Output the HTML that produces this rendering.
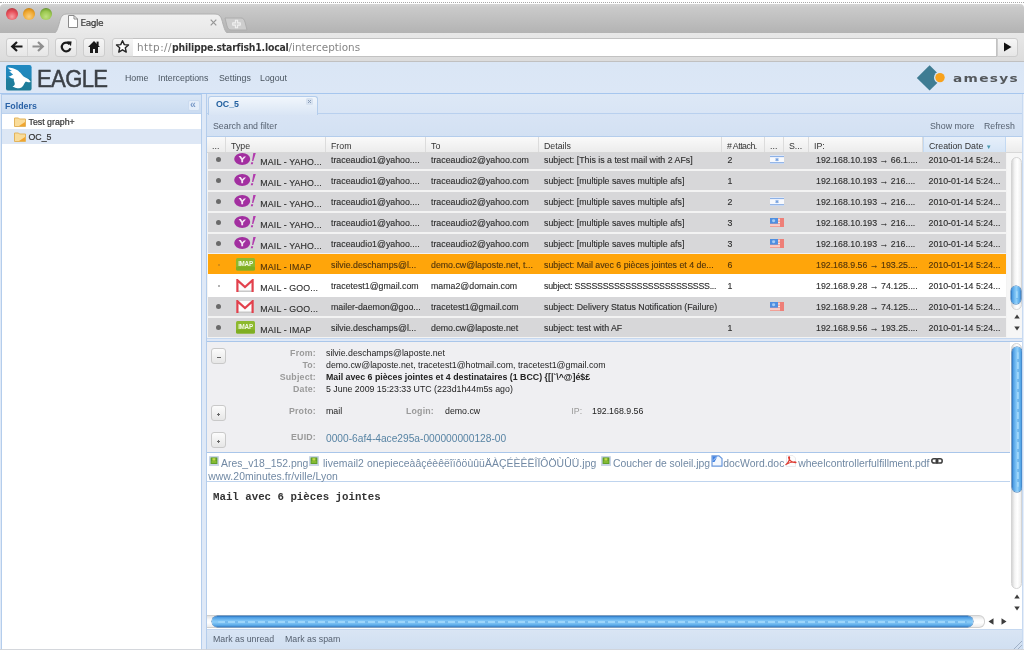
<!DOCTYPE html>
<html>
<head>
<meta charset="utf-8">
<title>Eagle</title>
<style>
*{box-sizing:border-box;margin:0;padding:0}
html,body{width:1024px;height:650px;overflow:hidden;background:#fff}
body{font-family:"Liberation Sans",sans-serif;font-size:11px;color:#222;position:relative;filter:blur(0.42px)}
.abs{position:absolute}
.t{position:absolute;white-space:nowrap;line-height:14px;height:14px}
/* browser chrome */
#titlebar{left:0;top:3.5px;width:1024px;height:29.5px;background:linear-gradient(#d6d6d6,#cacaca 12%,#c0c0c0 50%,#b3b3b3);border-radius:4px 4px 0 0}
#topline{left:0;top:2px;width:1024px;height:1px;border-top:1px dotted #a8a8a8}
#toolbar{left:0;top:33px;width:1024px;height:28.6px;background:linear-gradient(#e8e8e8,#dcdcdc);border-bottom:1px solid #c0c0c0}
.light{width:11.5px;height:11.5px;border-radius:6px;top:8px}
#btab{left:51px;top:13px;width:180px;height:21px}
.nbtn{top:37.5px;height:19px;border:1px solid #cdcdcd;border-radius:3px;background:linear-gradient(#f6f6f6,#e6e6e6)}
#url{left:133px;top:37.5px;width:864px;height:19px;background:#fff;border:1px solid #c2c2c2;border-left:none}
/* app */
#apphead{left:0;top:61.6px;width:1024px;height:32.4px;background:linear-gradient(#dae6f5,#dce7f6);border-bottom:1px solid #a6c6ee}
#appbg{left:0;top:94px;width:1024px;height:556px;background:#dfe9f7}
.nav{top:70.8px;color:#4a5560;font-size:8.8px}
/* west panel */
#west{left:1px;top:94px;width:201px;height:556px;border:1px solid #b4cdec;border-bottom:none;background:#fff}
#westhd{left:0;top:0;width:199px;height:19px;background:linear-gradient(#d9e6f6,#cbdcf1);border-bottom:1px solid #bdd3ef}
/* main */
#main{left:206px;top:94px;width:818px;height:556px;border-left:1px solid #b4cdec;background:#dfe8f6}
.row{position:absolute;left:1px;width:798px;height:19px;background:#d4d4d4}
.row.sel .t{color:#5c3600}
.tb{color:#566170;font-size:8.8px;letter-spacing:0}
.row .t{top:3px;color:#2c2c2c;font-size:8.8px;-webkit-text-stroke:0.12px #2c2c2c}
.hd{position:absolute;top:0;height:15px;line-height:18.6px;color:#333;border-right:1px solid #dcdcdc;padding-left:5px;white-space:nowrap;font-size:8.8px;overflow:hidden}

.vthumb{width:10px;border-radius:5px;background:linear-gradient(90deg,#2c72bc,#4f9fe4 14%,#7ec4f6 42%,#8ccdf8 55%,#5aabea 84%,#3a7cc0);box-shadow:0 0 0 0.5px #2f6fb0}
.hthumb{height:11px;border-radius:6px;background:linear-gradient(#2c72bc,#4f9fe4 14%,#7ec4f6 42%,#8ccdf8 55%,#5aabea 84%,#3a7cc0);box-shadow:0 0 0 0.5px #2f6fb0}
.pm{width:15px;height:16px;border:1px solid #c9c9c9;border-radius:3px;background:linear-gradient(#fcfcfc,#e6e6e6)}
.pm i{position:absolute;background:#666;display:block}
.lb{left:216px;width:100px;text-align:right;color:#9a9a9a;font-weight:bold;font-size:8.8px;letter-spacing:0.2px}
.vl{left:326px;color:#222;font-size:8.8px}
.at{font-size:10.4px;line-height:14px;color:#7189a4;top:456.5px}
.att s{display:inline-block;text-decoration:none;width:9px;height:8px;vertical-align:4px;margin-right:1px}
.att s.im{background:linear-gradient(#9fbf4a,#6f9a2a);border:1px solid #8aa8c0}
.att s.dc{background:#e8f0fb;border:1px solid #3d78c8;height:10px;vertical-align:1px}
.att s.pd{background:transparent;border-top:2px solid #d83a2a;height:6px}
.att s.lk{background:#555;height:3px;border-radius:2px;vertical-align:6px;width:10px}

.hthumb::after{content:"";position:absolute;left:6px;right:6px;top:4.5px;height:2px;background:repeating-linear-gradient(90deg,rgba(190,232,255,.4) 0 7px,rgba(60,140,215,.25) 7px 10px);border-radius:1px}
.vthumb::after{content:"";position:absolute;top:5px;bottom:5px;left:4.5px;width:2px;background:repeating-linear-gradient(rgba(190,232,255,.4) 0 7px,rgba(60,140,215,.25) 7px 10px);border-radius:1px}
</style>
</head>
<body>
<!-- ===== Browser chrome ===== -->
<div class="abs" id="topline"></div>
<div class="abs" id="titlebar"></div>
<div class="abs light" style="left:6px;background:radial-gradient(circle at 50% 72%,#f6a0a4,#e8505a 50%,#c8404a 72%,#7a3020 100%)"></div>
<div class="abs light" style="left:23px;background:radial-gradient(circle at 50% 72%,#f8cf80,#f0a830 50%,#d8901c 72%,#80500c 100%)"></div>
<div class="abs light" style="left:40px;background:radial-gradient(circle at 50% 72%,#bfe080,#9cc850 50%,#78a838 72%,#344c20 100%)"></div>
<svg class="abs" id="btab" viewBox="0 0 180 21">
  <defs><linearGradient id="tg" x1="0" y1="0" x2="0" y2="1"><stop offset="0" stop-color="#f0f0f0"/><stop offset="1" stop-color="#e8e8e8"/></linearGradient></defs>
  <path d="M0 21 C5 21 6 18 8 11 C10 3 11 1 17 1 L163 1 C169 1 170 3 172 11 C174 18 175 21 180 21 Z" fill="url(#tg)" stroke="#b0b0b0" stroke-width="1"/>
</svg>
<svg class="abs" style="left:224px;top:15.5px;width:24px;height:16px" viewBox="0 0 24 16">
  <path d="M1 2 L17 2 C19 2 20 3 21 6 L23 14 L7 14 C5 14 4 13 3 10 Z" fill="#cdcdcd" stroke="#adadad" stroke-width="1"/>
  <path d="M11.4 4.2 H13.6 V6.9 H16.3 V9.1 H13.6 V11.8 H11.4 V9.1 H8.7 V6.9 H11.4 Z" fill="#d2d2d2" stroke="#f0f0f0" stroke-width="1.1" stroke-linejoin="round"/>
</svg>
<svg class="abs" style="left:68px;top:15px;width:10px;height:13px" viewBox="0 0 10 13">
  <path d="M0.5 0.5 H6 L9.5 4 V12.5 H0.5 Z" fill="#fff" stroke="#8a8a8a" stroke-width="1"/>
  <path d="M6 0.5 V4 H9.5" fill="none" stroke="#8a8a8a" stroke-width="1"/>
</svg>
<div class="t" style="left:80.5px;top:16px;font-family:'DejaVu Sans','Liberation Sans',sans-serif;font-size:9px;color:#3a3a3a;letter-spacing:-0.5px;-webkit-text-stroke:0.2px #3a3a3a">Eagle</div>
<svg class="abs" style="left:209.5px;top:19.2px;width:7px;height:7px" viewBox="0 0 7 7"><path d="M0.7 0.7 L6.3 6.3 M6.3 0.7 L0.7 6.3" stroke="#969696" stroke-width="1.2"/></svg>
<div class="abs" id="toolbar"></div>
<!-- nav buttons -->
<div class="abs nbtn" style="left:6px;width:43px"></div>
<div class="abs" style="left:27px;top:38px;width:1px;height:18px;background:#d6d6d6"></div>
<div class="abs nbtn" style="left:55px;width:22px"></div>
<div class="abs nbtn" style="left:83px;width:22px"></div>
<div class="abs nbtn" style="left:112px;width:22px;border-radius:3px 0 0 3px"></div>
<div class="abs" id="url"></div>
<div class="abs nbtn" style="left:996.5px;width:21px;border-radius:0 3px 3px 0"></div>
<svg class="abs" style="left:10px;top:40px;width:14px;height:13px" viewBox="0 0 14 13"><path d="M12.5 6.5 H3 M7 2 L2.2 6.5 L7 11" fill="none" stroke="#1a1a1a" stroke-width="2.2" stroke-linejoin="miter"/></svg>
<svg class="abs" style="left:31px;top:40px;width:14px;height:13px" viewBox="0 0 14 13"><path d="M1.5 6.5 H11 M7 2 L11.8 6.5 L7 11" fill="none" stroke="#8f8f8f" stroke-width="2.2"/></svg>
<svg class="abs" style="left:59px;top:40px;width:14px;height:14px" viewBox="0 0 14 14"><path d="M10.6 4.2 A4.4 4.4 0 1 0 11.4 8.2" fill="none" stroke="#1a1a1a" stroke-width="2.2"/><path d="M8 1.2 L12.6 1.6 L12 6.2 Z" fill="#1a1a1a"/></svg>
<svg class="abs" style="left:87px;top:40px;width:14px;height:14px" viewBox="0 0 14 14"><path d="M7 1 L1 7 H3 V13 H6 V9 H8 V13 H11 V7 H13 Z" fill="#1a1a1a"/><rect x="9.6" y="1.6" width="2" height="4" fill="#1a1a1a"/></svg>
<svg class="abs" style="left:115.3px;top:39.3px;width:15px;height:15px" viewBox="0 0 16 16"><path d="M8 1.8 L9.9 6 L14.4 6.4 L11 9.4 L12 13.9 L8 11.5 L4 13.9 L5 9.4 L1.6 6.4 L6.1 6 Z" fill="#fff" stroke="#222" stroke-width="1.5" stroke-linejoin="round"/></svg>
<div class="t" style="left:137px;top:40px;font-family:'DejaVu Sans','Liberation Sans',sans-serif;font-size:10.4px;color:#858585"><span style="letter-spacing:0.45px">http://</span><span style="font-family:'DejaVu Sans Condensed','DejaVu Sans',sans-serif;color:#333;font-weight:bold;letter-spacing:-0.2px" id="dom">philippe.starfish1.local</span><span id="pth">/interceptions</span></div>
<svg class="abs" style="left:1002.5px;top:41.8px;width:9px;height:10px" viewBox="0 0 9 10"><path d="M1 0.5 L8.5 5 L1 9.5 Z" fill="#111"/></svg>

<!-- ===== App header ===== -->
<div class="abs" id="apphead"></div>
<div class="abs" id="appbg"></div>
<svg class="abs" style="left:6px;top:65px;width:25.6px;height:25.6px" viewBox="0 0 25.6 25.6">
  <defs><linearGradient id="lg" x1="0" y1="0" x2="0" y2="1"><stop offset="0" stop-color="#2089c2"/><stop offset="0.5" stop-color="#2087b8"/><stop offset="0.56" stop-color="#1f7f9e"/><stop offset="1" stop-color="#1f7c98"/></linearGradient></defs>
  <rect x="0" y="0" width="25.6" height="25.6" rx="2.2" fill="url(#lg)"/>
  <path d="M1.5 2.5 C5 2.6 9 3.6 11.5 5.3 C13 6.5 14 7.5 14.8 8.3 C15.8 9.5 16.6 10.8 17.6 11.6 C18.8 12.4 20 12.8 20.9 13.3 C22.2 14 23.2 14.8 23.7 15.5 L24.8 16.9 C23.8 17.1 22.8 17.2 22 17.2 C21 17 20 16.8 19.3 16.9 C18.8 17.6 18.5 18.2 18.2 18.8 C17.8 19.9 17.2 20.9 16.5 21.6 C15.6 22.6 14.4 23.1 13.2 23.3 C11.4 23.4 9.6 22.9 8.2 22.2 L6.5 21.6 C7.6 21 8.4 20.3 8.75 19.4 C8.9 18.3 8.4 17.2 7.9 16.1 C7.7 15.3 7.7 14.6 7.9 13.85 C6 13.5 4 12.8 2.4 11.6 C3.6 11.4 4.6 11 5.4 10.5 L7.1 9.4 C5.6 8.6 4.2 7.5 3.2 6.1 C4.2 6.3 5.2 6.3 6 6.1 C4.4 5.2 2.8 4 1.5 2.5 Z" fill="#fff"/>
</svg>
<div class="t" id="eagle" style="left:37px;top:64px;font-size:24px;line-height:29px;height:29px;color:#3c4046;letter-spacing:-0.7px;transform:scaleX(0.92);transform-origin:0 0;-webkit-text-stroke:0.5px #3c4046">EAGLE</div>
<div class="t nav" style="left:125px">Home</div>
<div class="t nav" style="left:158px">Interceptions</div>
<div class="t nav" style="left:219px">Settings</div>
<div class="t nav" style="left:260px">Logout</div>
<!-- amesys logo -->
<svg class="abs" style="left:914px;top:64px;width:110px;height:28px" viewBox="0 0 110 28">
  <path d="M2.8 13.9 L15.6 1.3 L28.4 13.9 L15.6 26.5 Z" fill="#3f7c93"/>
  <circle cx="26" cy="13.6" r="6" fill="#dbe6f5"/>
  <circle cx="26" cy="13.6" r="4.7" fill="#f8a21c"/>
  <text x="39" y="17.8" font-family="DejaVu Sans, Liberation Sans, sans-serif" font-size="10.6" font-weight="bold" textLength="66" lengthAdjust="spacingAndGlyphs" letter-spacing="1" fill="#54585c">amesys</text>
</svg>

<!-- ===== West panel ===== -->
<div class="abs" id="west">
  <div class="abs" id="westhd"></div>
  <div class="t" style="left:3px;top:4px;font-weight:bold;color:#2a62a6;font-size:8.8px">Folders</div>
  <div class="abs" style="left:186px;top:4.5px;width:11.5px;height:11px;background:#e4edf9;border:1px solid #cbdbf0;border-radius:2px"></div>
  <div class="t" style="left:188px;top:2px;color:#7a9ac8;font-size:10.5px;letter-spacing:-1px;font-weight:bold">«</div>
  <div class="abs" style="left:0;top:34px;width:199px;height:15px;background:#dde7f5"></div>
  <svg class="abs" style="left:12.2px;top:21.3px;width:12px;height:11px" viewBox="0 0 12 11"><path d="M0.5 2 H4.5 L5.5 3 H11.5 V10.5 H0.5 Z" fill="#f9dc9a" stroke="#e3b45c" stroke-width="1"/><path d="M5 10 L11 10 L11 6 Z" fill="#f1a52f"/></svg>
  <svg class="abs" style="left:12.2px;top:35.5px;width:12px;height:11px" viewBox="0 0 12 11"><path d="M0.5 2 H4.5 L5.5 3 H11.5 V10.5 H0.5 Z" fill="#f9dc9a" stroke="#e3b45c" stroke-width="1"/><path d="M5 10 L11 10 L11 6 Z" fill="#f1a52f"/></svg>
  <div class="t" style="left:26.5px;top:20px;color:#333;font-size:8.8px;-webkit-text-stroke:0.2px #333">Test graph+</div>
  <div class="t" style="left:26.5px;top:34.5px;color:#333;font-size:8.8px;-webkit-text-stroke:0.2px #333">OC_5</div>
</div>

<!-- ===== Main panel ===== -->
<div class="abs" id="main"></div>

<!-- tab strip -->
<div class="abs" style="left:207px;top:94px;width:817px;height:19px;background:linear-gradient(#dde8f6,#d9e5f5)"></div>
<div class="abs" style="left:207px;top:112.5px;width:817px;height:2px;background:#d7e4f5;border-top:1px solid #b9d0ee"></div>
<div class="abs" style="left:208px;top:96px;width:109.5px;height:18.5px;border:1px solid #b4cdec;border-bottom:none;border-radius:3px 3px 0 0;background:linear-gradient(#f1f6fc,#e4edf8 55%,#d9e5f5)"></div>
<div class="t" style="left:216px;top:97.3px;font-weight:bold;color:#22609f;font-size:8.8px">OC_5</div>
<svg class="abs" style="left:306px;top:98px;width:7px;height:7px" viewBox="0 0 7 7"><rect x="0" y="0" width="7" height="7" rx="1.5" fill="#d7e2f0"/><path d="M2 2 L5 5 M5 2 L2 5" stroke="#8a9db8" stroke-width="1"/></svg>
<!-- toolbar -->
<div class="abs" style="left:207px;top:114.5px;width:817px;height:22.5px;background:linear-gradient(#d8e4f5,#d3e1f3);border-bottom:1px solid #b4cdec"></div>
<div class="t tb" style="left:213px;top:119px">Search and filter</div>
<div class="t tb" style="left:930px;top:119px">Show more</div>
<div class="t tb" style="left:984px;top:119px">Refresh</div>
<!-- grid -->
<div class="abs" style="left:207px;top:137px;width:817px;height:202px;background:#f3f3f3"></div>
<div class="abs" id="ghd" style="left:207px;top:137px;width:817px;height:16px;background:linear-gradient(#fafafa,#ececec);border-bottom:1px solid #d8d8d8">
  <div class="hd" style="left:0;width:19px">...</div>
  <div class="hd" style="left:19px;width:100px">Type</div>
  <div class="hd" style="left:119px;width:100px">From</div>
  <div class="hd" style="left:219px;width:113px">To</div>
  <div class="hd" style="left:332px;width:183px">Details</div>
  <div class="hd" style="left:515px;width:43px;letter-spacing:-0.5px"># Attach.</div>
  <div class="hd" style="left:558px;width:19px">...</div>
  <div class="hd" style="left:577px;width:25px">S...</div>
  <div class="hd" style="left:602px;width:114px">IP:</div>
  <div class="hd" style="left:716px;width:83px;background:linear-gradient(#e6effa,#d6e5f6);border-left:1px solid #c3d9f2;border-right:1px solid #c3d9f2;padding-left:5px">Creation Date <span style="color:#4a9ab0;font-size:6px;position:relative;top:0px;left:0px">&#9660;</span></div>
</div>
<div class="abs" style="left:207px;top:153px;width:802px;height:185px;overflow:hidden">
<div class="row" style="top:-3.5px;height:19px;background:#d7d7d9"><div class="abs" style="left:8px;top:7px;width:5px;height:5px;border-radius:3px;background:#6a6a6a"></div><svg class="abs" style="left:26px;top:2px;width:23px;height:14px" viewBox="0 0 23 14"><ellipse cx="8.2" cy="7" rx="8" ry="6" fill="#a22fa0"/><path d="M4.6 4 L6.8 4 L8.3 6.3 L9.9 4.6 L12 4.6 L9.1 7.8 L9.1 10.2 L7.3 10.2 L7.3 7.8 Z" fill="#f4e4f4"/><path d="M19.3 1 L21.8 1 L19.3 9 L18 9 Z M17.2 10.3 L19.2 10.3 L18.8 12.3 L16.8 12.3 Z" fill="#b23cae"/></svg><div class="t" style="left:52.3px;top:5.6px;letter-spacing:0.15px">MAIL - YAHO...</div><div class="t" style="left:123px">traceaudio1@yahoo....</div><div class="t" style="left:223px">traceaudio2@yahoo.com</div><div class="t" style="left:336px">subject: [This is a test mail with 2 AFs]</div><div class="t" style="left:519.5px">2</div><svg class="abs" style="left:562px;top:5px;width:14px;height:9.2px" viewBox="0 0 14 10" preserveAspectRatio="none"><rect width="14" height="10" fill="#f7f9fd"/><rect y="0.8" width="14" height="1.5" fill="#8db1e6"/><rect y="7.7" width="14" height="1.5" fill="#8db1e6"/><path d="M7 2.9 L8.9 6.2 H5.1 Z M7 7.1 L5.1 3.8 H8.9 Z" fill="#78a3e0"/></svg><div class="t" style="left:608px">192.168.10.193 → 66.1....</div><div class="t" style="left:720.5px">2010-01-14 5:24...</div></div>
<div class="row" style="top:17.5px;height:19px;background:#d7d7d9"><div class="abs" style="left:8px;top:7px;width:5px;height:5px;border-radius:3px;background:#6a6a6a"></div><svg class="abs" style="left:26px;top:2px;width:23px;height:14px" viewBox="0 0 23 14"><ellipse cx="8.2" cy="7" rx="8" ry="6" fill="#a22fa0"/><path d="M4.6 4 L6.8 4 L8.3 6.3 L9.9 4.6 L12 4.6 L9.1 7.8 L9.1 10.2 L7.3 10.2 L7.3 7.8 Z" fill="#f4e4f4"/><path d="M19.3 1 L21.8 1 L19.3 9 L18 9 Z M17.2 10.3 L19.2 10.3 L18.8 12.3 L16.8 12.3 Z" fill="#b23cae"/></svg><div class="t" style="left:52.3px;top:5.6px;letter-spacing:0.15px">MAIL - YAHO...</div><div class="t" style="left:123px">traceaudio1@yahoo....</div><div class="t" style="left:223px">traceaudio2@yahoo.com</div><div class="t" style="left:336px">subject: [multiple saves multiple afs]</div><div class="t" style="left:519.5px">1</div><div class="t" style="left:608px">192.168.10.193 → 216....</div><div class="t" style="left:720.5px">2010-01-14 5:24...</div></div>
<div class="row" style="top:38.5px;height:19px;background:#d7d7d9"><div class="abs" style="left:8px;top:7px;width:5px;height:5px;border-radius:3px;background:#6a6a6a"></div><svg class="abs" style="left:26px;top:2px;width:23px;height:14px" viewBox="0 0 23 14"><ellipse cx="8.2" cy="7" rx="8" ry="6" fill="#a22fa0"/><path d="M4.6 4 L6.8 4 L8.3 6.3 L9.9 4.6 L12 4.6 L9.1 7.8 L9.1 10.2 L7.3 10.2 L7.3 7.8 Z" fill="#f4e4f4"/><path d="M19.3 1 L21.8 1 L19.3 9 L18 9 Z M17.2 10.3 L19.2 10.3 L18.8 12.3 L16.8 12.3 Z" fill="#b23cae"/></svg><div class="t" style="left:52.3px;top:5.6px;letter-spacing:0.15px">MAIL - YAHO...</div><div class="t" style="left:123px">traceaudio1@yahoo....</div><div class="t" style="left:223px">traceaudio2@yahoo.com</div><div class="t" style="left:336px">subject: [multiple saves multiple afs]</div><div class="t" style="left:519.5px">2</div><svg class="abs" style="left:562px;top:5px;width:14px;height:9.2px" viewBox="0 0 14 10" preserveAspectRatio="none"><rect width="14" height="10" fill="#f7f9fd"/><rect y="0.8" width="14" height="1.5" fill="#8db1e6"/><rect y="7.7" width="14" height="1.5" fill="#8db1e6"/><path d="M7 2.9 L8.9 6.2 H5.1 Z M7 7.1 L5.1 3.8 H8.9 Z" fill="#78a3e0"/></svg><div class="t" style="left:608px">192.168.10.193 → 216....</div><div class="t" style="left:720.5px">2010-01-14 5:24...</div></div>
<div class="row" style="top:59.5px;height:19px;background:#d7d7d9"><div class="abs" style="left:8px;top:7px;width:5px;height:5px;border-radius:3px;background:#6a6a6a"></div><svg class="abs" style="left:26px;top:2px;width:23px;height:14px" viewBox="0 0 23 14"><ellipse cx="8.2" cy="7" rx="8" ry="6" fill="#a22fa0"/><path d="M4.6 4 L6.8 4 L8.3 6.3 L9.9 4.6 L12 4.6 L9.1 7.8 L9.1 10.2 L7.3 10.2 L7.3 7.8 Z" fill="#f4e4f4"/><path d="M19.3 1 L21.8 1 L19.3 9 L18 9 Z M17.2 10.3 L19.2 10.3 L18.8 12.3 L16.8 12.3 Z" fill="#b23cae"/></svg><div class="t" style="left:52.3px;top:5.6px;letter-spacing:0.15px">MAIL - YAHO...</div><div class="t" style="left:123px">traceaudio1@yahoo....</div><div class="t" style="left:223px">traceaudio2@yahoo.com</div><div class="t" style="left:336px">subject: [multiple saves multiple afs]</div><div class="t" style="left:519.5px">3</div><svg class="abs" style="left:562px;top:5px;width:14px;height:9.2px" viewBox="0 0 14 10" preserveAspectRatio="none"><rect width="14" height="10" fill="#f1a097"/><rect y="1.4" width="14" height="1.3" fill="#fbe9e6"/><rect y="4.2" width="14" height="1.3" fill="#fbe9e6"/><rect y="7" width="14" height="1.3" fill="#fbe9e6"/><rect x="10" width="4" height="10" fill="#ee7f78"/><rect width="8" height="6.2" fill="#4f8fe0"/><circle cx="3.6" cy="3" r="1.6" fill="#a8ccf4"/></svg><div class="t" style="left:608px">192.168.10.193 → 216....</div><div class="t" style="left:720.5px">2010-01-14 5:24...</div></div>
<div class="row" style="top:80.5px;height:19px;background:#d7d7d9"><div class="abs" style="left:8px;top:7px;width:5px;height:5px;border-radius:3px;background:#6a6a6a"></div><svg class="abs" style="left:26px;top:2px;width:23px;height:14px" viewBox="0 0 23 14"><ellipse cx="8.2" cy="7" rx="8" ry="6" fill="#a22fa0"/><path d="M4.6 4 L6.8 4 L8.3 6.3 L9.9 4.6 L12 4.6 L9.1 7.8 L9.1 10.2 L7.3 10.2 L7.3 7.8 Z" fill="#f4e4f4"/><path d="M19.3 1 L21.8 1 L19.3 9 L18 9 Z M17.2 10.3 L19.2 10.3 L18.8 12.3 L16.8 12.3 Z" fill="#b23cae"/></svg><div class="t" style="left:52.3px;top:5.6px;letter-spacing:0.15px">MAIL - YAHO...</div><div class="t" style="left:123px">traceaudio1@yahoo....</div><div class="t" style="left:223px">traceaudio2@yahoo.com</div><div class="t" style="left:336px">subject: [multiple saves multiple afs]</div><div class="t" style="left:519.5px">3</div><svg class="abs" style="left:562px;top:5px;width:14px;height:9.2px" viewBox="0 0 14 10" preserveAspectRatio="none"><rect width="14" height="10" fill="#f1a097"/><rect y="1.4" width="14" height="1.3" fill="#fbe9e6"/><rect y="4.2" width="14" height="1.3" fill="#fbe9e6"/><rect y="7" width="14" height="1.3" fill="#fbe9e6"/><rect x="10" width="4" height="10" fill="#ee7f78"/><rect width="8" height="6.2" fill="#4f8fe0"/><circle cx="3.6" cy="3" r="1.6" fill="#a8ccf4"/></svg><div class="t" style="left:608px">192.168.10.193 → 216....</div><div class="t" style="left:720.5px">2010-01-14 5:24...</div></div>
<div class="row sel" style="top:101px;height:20px;background:#ffa50a"><div class="abs" style="left:0;top:0.5px;width:798px;height:19px"><div class="abs" style="left:10px;top:9px;width:2px;height:2px;border-radius:1px;background:#c8861a"></div><svg class="abs" style="left:28px;top:3px;width:19px;height:13px" viewBox="0 0 19 13"><rect x="0" y="0" width="19" height="12.5" rx="1.5" fill="#8db92e"/><rect x="0" y="8.5" width="19" height="4" rx="1.5" fill="#7fae22"/><text x="9.5" y="7.6" text-anchor="middle" font-family="Liberation Sans, sans-serif" font-weight="bold" font-size="6.3" fill="#f4f9e6" letter-spacing="-0.25">IMAP</text></svg><div class="t" style="left:52.3px;top:5.6px;letter-spacing:0.15px">MAIL - IMAP</div><div class="t" style="left:123px">silvie.deschamps@l...</div><div class="t" style="left:223px">demo.cw@laposte.net, t...</div><div class="t" style="left:336px">subject: Mail avec 6 pièces jointes et 4 de...</div><div class="t" style="left:519.5px">6</div><div class="t" style="left:608px">192.168.9.56 → 193.25....</div><div class="t" style="left:720.5px">2010-01-14 5:24...</div></div></div>
<div class="row" style="top:121px;height:23.5px;background:#ffffff"><div class="abs" style="left:0;top:1.5px;width:798px;height:19px"><div class="abs" style="left:10px;top:9px;width:2px;height:2px;border-radius:1px;background:#9a9a9a"></div><svg class="abs" style="left:28px;top:3px;width:18px;height:14px" viewBox="0 0 18 14"><rect x="1" y="1" width="16" height="12" fill="#fbfbfb"/><rect x="1" y="11.5" width="16" height="1.5" fill="#c8c8c8"/><path d="M1.4 13 V1.2 L9 8 L16.6 1.2 V13" fill="none" stroke="#e2404c" stroke-width="2.2" stroke-linejoin="miter"/></svg><div class="t" style="left:52.3px;top:5.6px;letter-spacing:0.15px">MAIL - GOO...</div><div class="t" style="left:123px">tracetest1@gmail.com</div><div class="t" style="left:223px">mama2@domain.com</div><div class="t" style="left:336px;letter-spacing:-0.24px">subject: SSSSSSSSSSSSSSSSSSSSSSSS...</div><div class="t" style="left:519.5px">1</div><div class="t" style="left:608px">192.168.9.28 → 74.125....</div><div class="t" style="left:720.5px">2010-01-14 5:24...</div></div></div>
<div class="row" style="top:143.5px;height:19px;background:#d7d7d9"><div class="abs" style="left:8px;top:7px;width:5px;height:5px;border-radius:3px;background:#6a6a6a"></div><svg class="abs" style="left:28px;top:3px;width:18px;height:14px" viewBox="0 0 18 14"><rect x="1" y="1" width="16" height="12" fill="#fbfbfb"/><rect x="1" y="11.5" width="16" height="1.5" fill="#c8c8c8"/><path d="M1.4 13 V1.2 L9 8 L16.6 1.2 V13" fill="none" stroke="#e2404c" stroke-width="2.2" stroke-linejoin="miter"/></svg><div class="t" style="left:52.3px;top:5.6px;letter-spacing:0.15px">MAIL - GOO...</div><div class="t" style="left:123px">mailer-daemon@goo...</div><div class="t" style="left:223px">tracetest1@gmail.com</div><div class="t" style="left:336px">subject: Delivery Status Notification (Failure)</div><svg class="abs" style="left:562px;top:5px;width:14px;height:9.2px" viewBox="0 0 14 10" preserveAspectRatio="none"><rect width="14" height="10" fill="#f1a097"/><rect y="1.4" width="14" height="1.3" fill="#fbe9e6"/><rect y="4.2" width="14" height="1.3" fill="#fbe9e6"/><rect y="7" width="14" height="1.3" fill="#fbe9e6"/><rect x="10" width="4" height="10" fill="#ee7f78"/><rect width="8" height="6.2" fill="#4f8fe0"/><circle cx="3.6" cy="3" r="1.6" fill="#a8ccf4"/></svg><div class="t" style="left:608px">192.168.9.28 → 74.125....</div><div class="t" style="left:720.5px">2010-01-14 5:24...</div></div>
<div class="row" style="top:164.5px;height:19px;background:#d7d7d9"><div class="abs" style="left:8px;top:7px;width:5px;height:5px;border-radius:3px;background:#6a6a6a"></div><svg class="abs" style="left:28px;top:3px;width:19px;height:13px" viewBox="0 0 19 13"><rect x="0" y="0" width="19" height="12.5" rx="1.5" fill="#8db92e"/><rect x="0" y="8.5" width="19" height="4" rx="1.5" fill="#7fae22"/><text x="9.5" y="7.6" text-anchor="middle" font-family="Liberation Sans, sans-serif" font-weight="bold" font-size="6.3" fill="#f4f9e6" letter-spacing="-0.25">IMAP</text></svg><div class="t" style="left:52.3px;top:5.6px;letter-spacing:0.15px">MAIL - IMAP</div><div class="t" style="left:123px">silvie.deschamps@l...</div><div class="t" style="left:223px">demo.cw@laposte.net</div><div class="t" style="left:336px">subject: test with AF</div><div class="t" style="left:519.5px">1</div><div class="t" style="left:608px">192.168.9.56 → 193.25....</div><div class="t" style="left:720.5px">2010-01-14 5:24...</div></div>
</div>

<!-- grid scrollbar -->
<div class="abs" style="left:1007px;top:153px;width:15px;height:185px;background:#f6f6f6"></div>
<div class="abs" style="left:1010.5px;top:156.5px;width:11.5px;height:153px;border-radius:6px;background:linear-gradient(90deg,#d6d6d6,#f4f4f4 30%,#ffffff 60%,#eeeeee);border:1px solid #d4d4d4"></div>
<div class="abs vthumb" style="left:1011px;top:286px;height:18px"></div>
<svg class="abs" style="left:1013.6px;top:313.5px;width:6px;height:5px" viewBox="0 0 7 6"><path d="M3.5 0.5 L6.8 5.5 H0.2 Z" fill="#3c3c3c"/></svg>
<svg class="abs" style="left:1013.6px;top:325.5px;width:6px;height:5px" viewBox="0 0 7 6"><path d="M3.5 5.5 L6.8 0.5 H0.2 Z" fill="#3c3c3c"/></svg>
<!-- detail panel -->
<div class="abs" style="left:207px;top:338px;width:817px;height:3px;background:#dfe8f6;border-top:1px solid #c5d8f0"></div>
<div class="abs" style="left:207px;top:341px;width:817px;height:289px;background:#fff;border-top:1px solid #a9c6ea"></div>
<div class="abs" style="left:207px;top:342px;width:803px;height:110px;background:#efeff2"></div>
<div class="abs pm" style="left:211px;top:348px"><i style="left:5px;top:8px;width:4px;height:1px"></i></div>
<div class="abs pm" style="left:211px;top:405px"><i style="left:5px;top:8px;width:3px;height:1px"></i><i style="left:6px;top:7px;width:1px;height:3px"></i></div>
<div class="abs pm" style="left:211px;top:432px"><i style="left:5px;top:8px;width:3px;height:1px"></i><i style="left:6px;top:7px;width:1px;height:3px"></i></div>
<div class="t lb" style="top:346px">From:</div>
<div class="t lb" style="top:358px">To:</div>
<div class="t lb" style="top:370px">Subject:</div>
<div class="t lb" style="top:382px">Date:</div>
<div class="t lb" style="top:404px">Proto:</div>
<div class="t lb" style="top:430px">EUID:</div>
<div class="t vl" style="top:346px">silvie.deschamps@laposte.net</div>
<div class="t vl" style="top:358px">demo.cw@laposte.net, tracetest1@hotmail.com, tracetest1@gmail.com</div>
<div class="t vl" style="top:370px;font-weight:bold">Mail avec 6 pièces jointes et 4 destinataires (1 BCC) {[|`\^@]é$£</div>
<div class="t vl" style="top:382px">5 June 2009 15:23:33 UTC (223d1h44m5s ago)</div>
<div class="t vl" style="top:404px">mail</div>
<div class="t lb" style="top:404px;left:384px;width:50px">Login:</div>
<div class="t vl" style="top:404px;left:445px">demo.cw</div>
<div class="t lb" style="top:404px;left:532.5px;width:50px;font-weight:normal">IP:</div>
<div class="t vl" style="top:404px;left:592px">192.168.9.56</div>
<div class="t" style="top:432px;left:326px;font-size:10.2px;color:#5884a4">0000-6af4-4ace295a-000000000128-00</div>
<!-- attachments -->
<div class="abs" style="left:207px;top:452px;width:803px;height:30px;background:#fff;border-top:1px solid #a9c6ea;border-bottom:1px solid #bfd4ee"></div>
<svg class="abs" style="left:209px;top:455.5px;width:10px;height:10.5px" viewBox="0 0 10 10.5"><rect x="0" y="0" width="10" height="10.5" rx="1" fill="#c9d5e6"/><rect x="1.6" y="1.4" width="6.8" height="6.6" fill="#5f9f28"/><rect x="3.4" y="2.2" width="3" height="2.4" fill="#c7d94a"/><rect x="2.6" y="5.2" width="4.8" height="1.6" fill="#8fc23a"/></svg><div class="t at" style="left:221px">Ares_v18_152.png</div><svg class="abs" style="left:308.7px;top:455.5px;width:10px;height:10.5px" viewBox="0 0 10 10.5"><rect x="0" y="0" width="10" height="10.5" rx="1" fill="#c9d5e6"/><rect x="1.6" y="1.4" width="6.8" height="6.6" fill="#5f9f28"/><rect x="3.4" y="2.2" width="3" height="2.4" fill="#c7d94a"/><rect x="2.6" y="5.2" width="4.8" height="1.6" fill="#8fc23a"/></svg><div class="t at" style="left:323px;letter-spacing:0.06px">livemail2 onepieceàâçéèêëîïôöùûüÄÀÇÉÈÊËÎÏÔÖÙÛÜ.jpg</div><svg class="abs" style="left:600.8px;top:455.5px;width:10px;height:10.5px" viewBox="0 0 10 10.5"><rect x="0" y="0" width="10" height="10.5" rx="1" fill="#c9d5e6"/><rect x="1.6" y="1.4" width="6.8" height="6.6" fill="#5f9f28"/><rect x="3.4" y="2.2" width="3" height="2.4" fill="#c7d94a"/><rect x="2.6" y="5.2" width="4.8" height="1.6" fill="#8fc23a"/></svg><div class="t at" style="left:613px">Coucher de soleil.jpg</div><svg class="abs" style="left:711px;top:455px;width:12px;height:12px" viewBox="0 0 12 12"><path d="M1 0.8 H8 L11 3.5 V11.2 H1 Z" fill="#f4f8fe" stroke="#6a98dc" stroke-width="1.2"/><path d="M1.5 1.2 H6.5 L3.5 7 H1.5 Z" fill="#3f80e0"/><path d="M2.2 5.5 L6 1.6" stroke="#cfe0fa" stroke-width="0.9"/></svg><div class="t at" style="left:723.3px">docWord.doc</div><svg class="abs" style="left:784.5px;top:455px;width:12px;height:12px" viewBox="0 0 12 12"><path d="M1.5 0.5 H8 L10.5 3 V11.5 H1.5 Z" fill="#fdfdfd" stroke="#e4e4e8" stroke-width="0.8"/><path d="M0.8 9.6 C3 8 4.6 5.4 4.6 2.6 C4.6 1.6 3.6 1.6 3.6 2.6 C3.8 5 6.6 7.6 10.6 7.8 C11.6 7.4 10.6 6.6 9.4 6.8 C6.4 7 3.4 8 0.8 9.6 Z" fill="none" stroke="#de3a30" stroke-width="1.15" stroke-linejoin="round"/></svg><div class="t at" style="left:798.3px">wheelcontrollerfulfillment.pdf</div><svg class="abs" style="left:930.6px;top:458px;width:12px;height:6px" viewBox="0 0 12 6"><rect x="0.8" y="0.8" width="6" height="4.2" rx="2.1" fill="none" stroke="#3e3e3e" stroke-width="1.5"/><rect x="5.2" y="0.8" width="6" height="4.2" rx="2.1" fill="none" stroke="#3e3e3e" stroke-width="1.5"/></svg><div class="t at" style="left:208.2px;top:469.5px;letter-spacing:0.07px">www.20minutes.fr/ville/Lyon</div>
<div class="t" style="left:213px;top:489.5px;font-family:'Liberation Mono',monospace;font-weight:bold;font-size:10.75px;color:#333">Mail avec 6 pièces jointes</div>
<!-- detail vertical scrollbar -->
<div class="abs" style="left:1010.5px;top:343px;width:11.5px;height:246px;border-radius:6px;background:linear-gradient(90deg,#d6d6d6,#f4f4f4 30%,#ffffff 60%,#eeeeee);border:1px solid #d4d4d4"></div>
<div class="abs vthumb" style="left:1012px;top:347px;height:145px"></div>
<svg class="abs" style="left:1013.6px;top:593.5px;width:6px;height:5px" viewBox="0 0 7 6"><path d="M3.5 0.5 L6.8 5.5 H0.2 Z" fill="#3c3c3c"/></svg>
<svg class="abs" style="left:1013.6px;top:605.5px;width:6px;height:5px" viewBox="0 0 7 6"><path d="M3.5 5.5 L6.8 0.5 H0.2 Z" fill="#3c3c3c"/></svg>
<!-- horizontal scrollbar -->
<div class="abs" style="left:207px;top:615px;width:778px;height:13px;border-radius:0 6px 6px 0;background:linear-gradient(#e2e2e2,#fbfbfb 35%,#ffffff 60%,#ececec);border:1px solid #d0d0d0;border-left:none"></div>
<div class="abs hthumb" style="left:212px;top:616px;width:761px"></div>
<svg class="abs" style="left:988px;top:618px;width:6px;height:7px" viewBox="0 0 6 7"><path d="M0.5 3.5 L5.5 0.2 V6.8 Z" fill="#3c3c3c"/></svg>
<svg class="abs" style="left:1001px;top:618px;width:6px;height:7px" viewBox="0 0 6 7"><path d="M5.5 3.5 L0.5 0.2 V6.8 Z" fill="#3c3c3c"/></svg>
<!-- bottom toolbar -->
<div class="abs" style="left:207px;top:629px;width:817px;height:21px;background:linear-gradient(#d9e5f4,#d0dff1);border-top:1px solid #c5d8f0"></div>
<div class="t tb" style="left:213px;top:632px">Mark as unread</div>
<div class="t tb" style="left:285px;top:632px">Mark as spam</div>
<svg class="abs" style="left:1012px;top:638px;width:12px;height:12px" viewBox="0 0 12 12"><path d="M1 12 L12 1 M5 12 L12 5 M9 12 L12 9" stroke="#9fb0c6" stroke-width="1"/></svg>
<div class="abs" style="left:1021.5px;top:94px;width:2.5px;height:556px;background:#e6eef9;border-left:1px solid #c8daf1"></div>

<div class="abs" style="left:0;top:648.5px;width:1024px;height:1.5px;background:#cfd3d8;opacity:0.9"></div>
</body>
</html>
